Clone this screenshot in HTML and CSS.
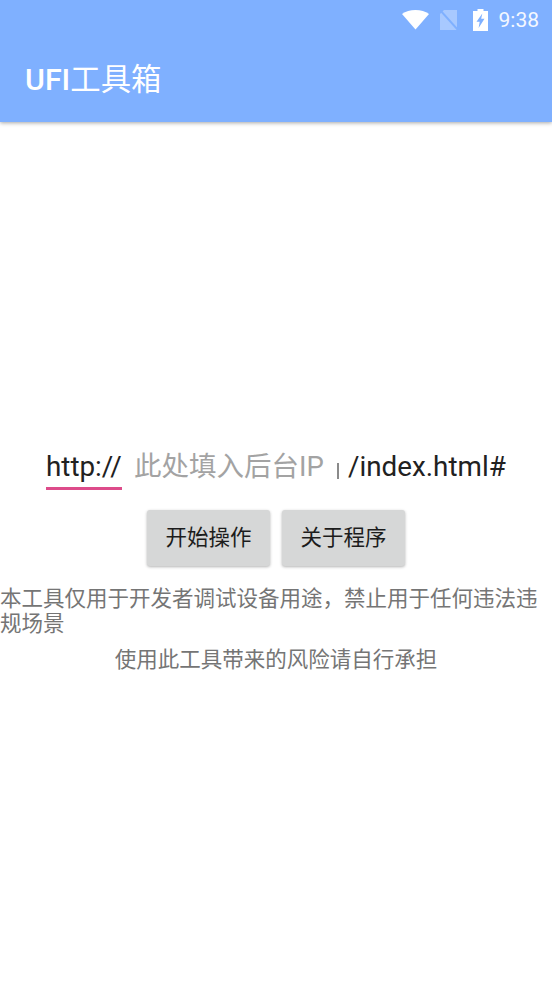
FILE: index.html
```html
<!DOCTYPE html>
<html lang="zh-CN">
<head>
<meta charset="utf-8">
<title>UFI工具箱</title>
<link rel="stylesheet" href="styles.css">
</head>
<body>
<div class="app">
  <header class="appbar">
    <div class="status">
      <svg class="ic-wifi" viewBox="0 0 27 20"><path d="M13.500 19.500 0 4C3.600 1.400 8.200 0 13.500 0S23.400 1.400 27 4Z" fill="#fff"/></svg>
      <svg class="ic-sim" viewBox="0 0 18 20"><path d="M4 0h13v20H0V4Z" fill="#fff" opacity=".32"/><path d="M0 0 18 20" stroke="#7fb0ff" stroke-width="2"/></svg>
      <svg class="ic-bat" viewBox="0 0 15 22"><path d="M4.500 0h6v2H15v20H0V2h4.500Z" fill="#fff"/><path d="M9.300 4.500 3.500 12.800h3.200L5.600 19l5.900-9.300H8.200Z" fill="#7fb0ff"/></svg>
      <span class="clock">9:38</span>
    </div>
    <h1 class="title">UFI<span class="title-cjk">工具箱</span></h1>
  </header>
  <main class="content">
    <div class="url-row">
      <span class="scheme">http://</span>
      <span class="host"><span class="placeholder">此处填入后台IP</span><span class="caret"></span></span>
      <span class="path">/index.html#</span>
    </div>
    <div class="actions">
      <button class="btn" type="button">开始操作</button>
      <button class="btn" type="button">关于程序</button>
    </div>
    <p class="notice">本工具仅用于开发者调试设备用途，禁止用于任何违法违规场景</p>
    <p class="risk">使用此工具带来的风险请自行承担</p>
  </main>
</div>
</body>
</html>
```

FILE: styles.css
```css
* { box-sizing: border-box; }
html, body { margin: 0; height: 100%; background: #fff; }
body { font-family: Roboto, "Noto Sans CJK SC", sans-serif; overflow: hidden; }
.app { width: 552px; height: 983px; display: flex; flex-direction: column; }
.appbar {
  height: 122px;
  background: #7fb0ff;
  box-shadow: 0 1px 4px rgba(0, 0, 0, .35);
  color: #fff;
  flex: none;
}
.status {
  height: 40px;
  display: flex;
  align-items: center;
  justify-content: flex-end;
  padding-right: 13px;
}
.ic-wifi { width: 27px; height: 20px; margin-right: 11px; }
.ic-sim { width: 18px; height: 20px; margin-right: 15px; }
.ic-bat { width: 15px; height: 22px; margin-right: 11px; }
.clock { font-size: 21px; line-height: 40px; color: #f4f8ff; }
.title {
  margin: 0;
  padding: 0 0 0 25px;
  font-size: 30.400px;
  font-weight: 500;
  line-height: 80px;
}
.title-cjk { font-weight: 400; }
.content { flex: 1; padding-top: 320px; }
.url-row {
  height: 58px;
  display: flex;
  align-items: flex-start;
  padding-left: 46px;
  font-size: 27.800px;
  line-height: 50px;
  color: #212121;
}
.scheme {
  width: 76px;
  height: 48px;
  border-bottom: 3px solid #dd4b8a;
}
.host {
  width: 226px;
  padding-left: 13px;
  display: flex;
  align-items: center;
  height: 50px;
}
.placeholder { color: #a3a3a3; font-size: 27.500px; margin-left: -1px; }
.caret {
  width: 2px;
  height: 16px;
  margin: 8px 0 0 13px;
  background: #8a8a8a;
}
.actions {
  display: flex;
  justify-content: center;
  gap: 12px;
  margin-top: 10px;
}
.btn {
  width: 123px;
  height: 56px;
  border: 0;
  border-radius: 3px;
  background: #d6d7d7;
  box-shadow: 0 1px 3px rgba(0, 0, 0, .3);
  font: 21.500px/56px Roboto, "Noto Sans CJK SC", sans-serif;
  color: #1c1c1c;
  padding: 0;
}
.notice, .risk {
  margin: 0;
  font-size: 21.500px;
  color: #757575;
}
.notice { margin-top: 20px; line-height: 25px; }
.risk { margin-top: 11px; line-height: 25px; text-align: center; }
```
